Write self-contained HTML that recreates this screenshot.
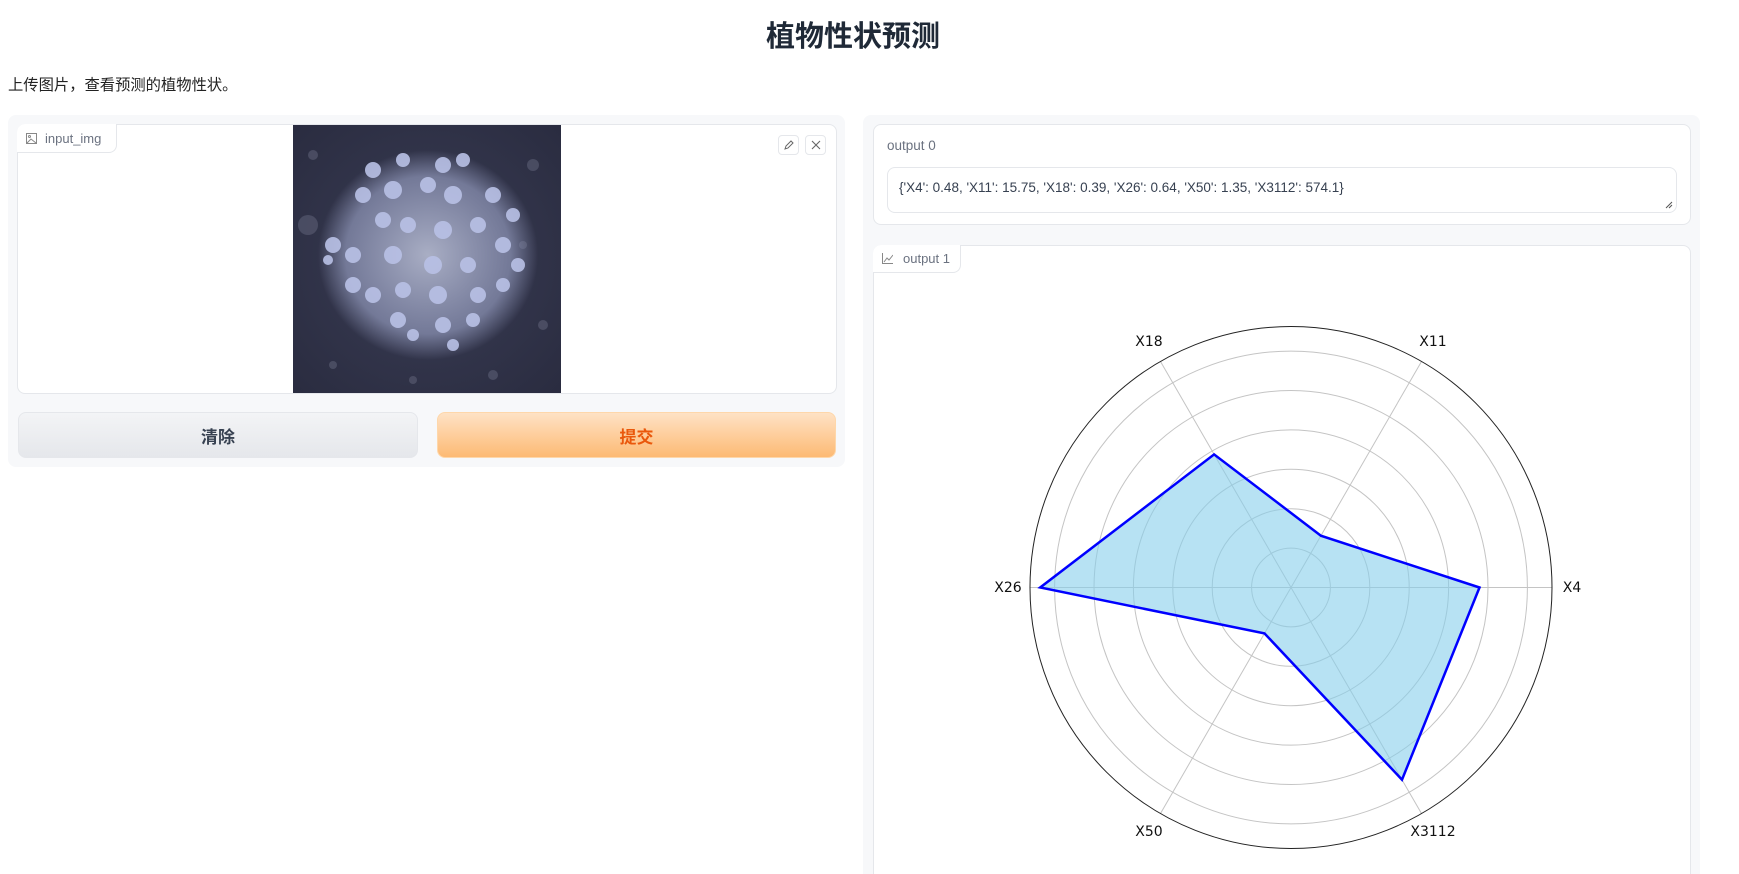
<!DOCTYPE html>
<html style="width:1739px;height:874px;overflow:hidden"><head><meta charset="utf-8"><style>
*{box-sizing:border-box;margin:0;padding:0}
body{width:1739px;height:874px;background:#fff;font-family:"Liberation Sans","Noto Sans CJK SC",sans-serif;position:relative;overflow:hidden;color:#1f2937}
.abs{position:absolute}
h1{position:absolute;left:0;width:1706px;top:13px;text-align:center;font-size:29px;font-weight:bold;color:#1f2937;font-family:"Liberation Sans","Noto Sans CJK SC",sans-serif}
.panel{background:#f7f8fa;border-radius:8px}
.box{background:#fff;border:1px solid #e5e7eb;border-radius:8px}
.lbl{background:#fff;border:1px solid #e5e7eb;border-top:none;border-left:none;border-radius:0 0 8px 0;font-size:13px;color:#6b7280;display:flex;align-items:center;gap:8px;padding-left:9px}
.btn{border-radius:8px;display:flex;align-items:center;justify-content:center;font-size:17px;font-weight:bold}
.ib{border:1px solid #e5e7eb;border-radius:4px;background:#fff;display:flex;align-items:center;justify-content:center}
</style></head><body>
<h1>植物性状预测</h1>
<div class="abs" style="left:8px;top:73px;font-size:15.3px;color:#222">上传图片，查看预测的植物性状。</div>

<div class="abs panel" style="left:8px;top:115px;width:837px;height:352px"></div>
<div class="abs box" style="left:17px;top:124px;width:820px;height:270px;overflow:hidden">
<svg class="abs" style="left:275px;top:0" width="268" height="268" viewBox="0 0 268 268">
<defs><radialGradient id="bg" cx="50%" cy="50%" r="70%"><stop offset="0" stop-color="#3a3d55"/><stop offset="1" stop-color="#2a2c40"/></radialGradient>
<radialGradient id="pl" cx="50%" cy="50%" r="50%"><stop offset="0" stop-color="#a9aec4"/><stop offset="0.75" stop-color="#8f96b8" stop-opacity=".7"/><stop offset="1" stop-color="#8f96b8" stop-opacity="0"/></radialGradient></defs>
<rect width="268" height="268" fill="url(#bg)"/>
<g fill="#55586e" opacity=".7"><circle cx="20" cy="30" r="5"/><circle cx="240" cy="40" r="6"/><circle cx="15" cy="100" r="10"/><circle cx="250" cy="200" r="5"/><circle cx="40" cy="240" r="4"/><circle cx="200" cy="250" r="5"/><circle cx="120" cy="255" r="4"/><circle cx="230" cy="120" r="4"/></g>
<ellipse cx="135" cy="130" rx="110" ry="105" fill="url(#pl)"/>
<g fill="#b9c1e6" opacity=".9"><circle cx="80" cy="45" r="8"/><circle cx="110" cy="35" r="7"/><circle cx="150" cy="40" r="8"/><circle cx="170" cy="35" r="7"/><circle cx="70" cy="70" r="8"/><circle cx="100" cy="65" r="9"/><circle cx="135" cy="60" r="8"/><circle cx="160" cy="70" r="9"/><circle cx="200" cy="70" r="8"/><circle cx="220" cy="90" r="7"/><circle cx="90" cy="95" r="8"/><circle cx="115" cy="100" r="8"/><circle cx="150" cy="105" r="9"/><circle cx="185" cy="100" r="8"/><circle cx="210" cy="120" r="8"/><circle cx="40" cy="120" r="8"/><circle cx="60" cy="130" r="8"/><circle cx="100" cy="130" r="9"/><circle cx="140" cy="140" r="9"/><circle cx="175" cy="140" r="8"/><circle cx="225" cy="140" r="7"/><circle cx="60" cy="160" r="8"/><circle cx="80" cy="170" r="8"/><circle cx="110" cy="165" r="8"/><circle cx="145" cy="170" r="9"/><circle cx="185" cy="170" r="8"/><circle cx="210" cy="160" r="7"/><circle cx="105" cy="195" r="8"/><circle cx="150" cy="200" r="8"/><circle cx="180" cy="195" r="7"/><circle cx="120" cy="210" r="6"/><circle cx="160" cy="220" r="6"/><circle cx="35" cy="135" r="5"/></g>
</svg>
</div>
<div class="abs lbl" style="left:17px;top:124px;width:100px;height:29px;border-top-left-radius:8px">
<svg width="11" height="11" viewBox="0 0 11 11" fill="none" stroke="#888" stroke-width="1"><rect x=".5" y=".5" width="10" height="10"/><circle cx="3.5" cy="3.5" r="1"/><path d="M1 10l4-4 5 4"/></svg>input_img</div>
<div class="abs ib" style="left:778px;top:135px;width:21px;height:20px"><svg width="11" height="11" viewBox="0 0 11 11" fill="none" stroke="#666" stroke-width="1"><path d="M2 9l1-3 5-5 2 2-5 5z"/></svg></div>
<div class="abs ib" style="left:805px;top:135px;width:21px;height:20px"><svg width="10" height="10" viewBox="0 0 10 10" stroke="#666" stroke-width="1.1"><path d="M1 1l8 8M9 1l-8 8"/></svg></div>
<div class="abs btn" style="left:18px;top:412px;width:400px;height:46px;background:linear-gradient(#f3f4f6,#e5e7eb);border:1px solid #e5e7eb;color:#374151">清除</div>
<div class="abs btn" style="left:437px;top:412px;width:399px;height:46px;background:linear-gradient(#fee2c5,#fdba74);border:1px solid #fed7aa;color:#ea580c">提交</div>

<div class="abs panel" style="left:863px;top:115px;width:837px;height:759px;border-radius:8px 8px 0 0"></div>
<div class="abs box" style="left:873px;top:124px;width:818px;height:101px"></div>
<div class="abs" style="left:887px;top:138px;font-size:13.5px;color:#6b7280">output 0</div>
<div class="abs" style="left:887px;top:167px;width:790px;height:46px;border:1px solid #e5e7eb;border-radius:8px;background:#fff;font-size:13.5px;color:#374151;padding:12px 11px">{'X4': 0.48, 'X11': 15.75, 'X18': 0.39, 'X26': 0.64, 'X50': 1.35, 'X3112': 574.1}
<svg class="abs" style="right:3px;bottom:3px" width="8" height="8" stroke="#555" stroke-width="1"><path d="M1 7L7 1M4 7L7 4"/></svg></div>
<div class="abs box" style="left:873px;top:245px;width:818px;height:629px;border-bottom:none;border-radius:8px 8px 0 0"></div>
<div class="abs lbl" style="left:873px;top:245px;width:88px;height:28px;border-top-left-radius:8px;gap:10px">
<svg width="11" height="11" viewBox="0 0 11 11" fill="none" stroke="#888" stroke-width="1"><path d="M.5 0v10.5H11M2 9l3-4 2 2 4-5"/></svg>output 1</div>

<svg class="abs" style="left:0;top:0" width="1739" height="874">
<g fill="none" stroke="#c4c4c4" stroke-width="1">
<circle cx="1291" cy="587.5" r="39.4"/><circle cx="1291" cy="587.5" r="78.8"/><circle cx="1291" cy="587.5" r="118.2"/><circle cx="1291" cy="587.5" r="157.6"/><circle cx="1291" cy="587.5" r="197"/><circle cx="1291" cy="587.5" r="236.4"/>
<path d="M1030 587.5H1552M1160.5 361.5L1421.5 813.5M1421.5 361.5L1160.5 813.5"/>
</g>
<circle cx="1291" cy="587.5" r="261" fill="none" stroke="#222" stroke-width="1"/>
<polygon points="1479.5,587.5 1320.9,535.7 1214.1,454.4 1040.2,587.5 1264.5,633.4 1402,779.7" fill="#87ceeb" fill-opacity=".6" stroke="#0000ff" stroke-width="2.5" stroke-linejoin="miter"/>
<g font-family="DejaVu Sans,sans-serif" font-size="14" fill="#111" text-anchor="middle">
<text x="1572" y="592">X4</text><text x="1433" y="346">X11</text><text x="1149" y="346">X18</text><text x="1008" y="592">X26</text><text x="1149" y="836">X50</text><text x="1433" y="836">X3112</text></g>
</svg>
</body></html>
